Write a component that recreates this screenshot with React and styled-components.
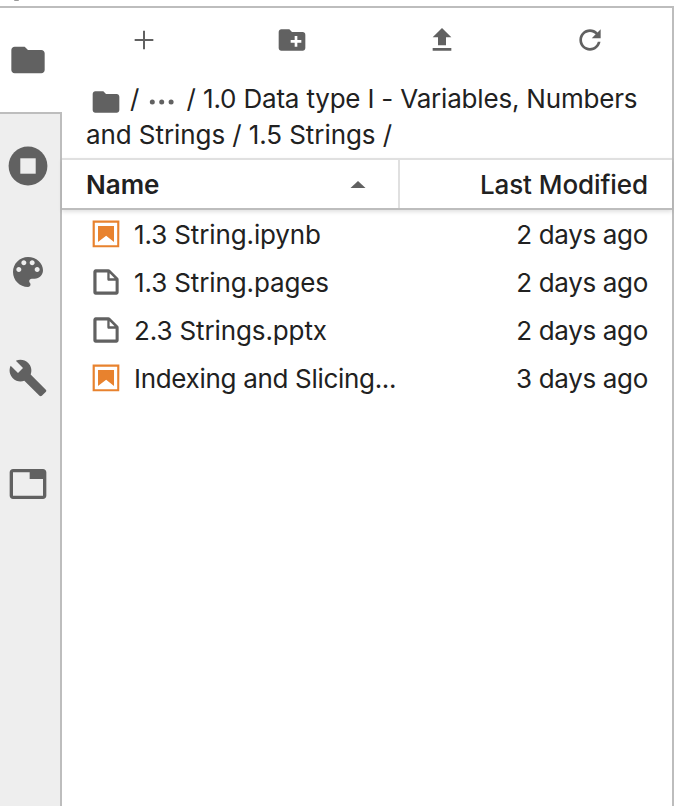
import React from 'react';
import styled, { createGlobalStyle } from 'styled-components';

const Global = createGlobalStyle`
  * { box-sizing: border-box; }
  body { margin: 0; background: #fff; overflow: hidden; }
`;

const Page = styled.div`
  width: 674px;
  height: 806px;
  display: flex;
  flex-direction: column;
  font-family: Inter, 'Liberation Sans', sans-serif;
  font-size: 26px;
  color: #212121;
  background: #fff;
`;

const TopStrip = styled.header`
  flex: 0 0 8px;
  padding-left: 14px;
  border-bottom: 2px solid #bdbdbd;
`;

const StripMark = styled.div`
  width: 5px;
  height: 1px;
  border-radius: 0 0 3px 3px;
  background: #999;
`;

const Body = styled.div`
  flex: 1;
  min-height: 0;
  display: flex;
  border-right: 2px solid #bdbdbd;
`;

const SideBar = styled.nav`
  flex: 0 0 62px;
  display: flex;
  flex-direction: column;
`;

const ActiveTab = styled.div`
  flex: 0 0 104px;
  padding-left: 8px;
  display: flex;
  align-items: center;
`;

const TabList = styled.div`
  flex: 1;
  background: #eee;
  border-top: 2px solid #bdbdbd;
  border-right: 2px solid #bdbdbd;
`;

const SideTab = styled.div`
  height: 106px;
  padding: 0 0 2px 8px;
  display: flex;
  align-items: center;
`;

const Browser = styled.main`
  flex: 1;
  min-width: 0;
`;

const Toolbar = styled.div`
  height: 64px;
  padding-left: 66px;
  display: grid;
  grid-template-columns: 148px 150px 148px 32px;
  align-items: center;
`;

const Crumbs = styled.div`
  height: 86px;
  padding: 9px 0 0 24px;
`;

const CrumbLine = styled.div`
  height: 36px;
  display: flex;
  align-items: center;
  white-space: pre;
`;

const CrumbIcon = styled.span`
  display: flex;
  padding: ${(p) => p.$pad};
`;

const Label = styled.span`
  white-space: pre;
  line-height: 36px;
  letter-spacing: ${(p) => p.$track || 0}px;
`;

const HeaderRow = styled.div`
  height: 52px;
  display: grid;
  grid-template-columns: 338px 1fr;
  border-top: 2px solid #e0e0e0;
  border-bottom: 2px solid #bdbdbd;
  box-shadow: 0 2px 4px rgba(0, 0, 0, 0.12);
  font-weight: 600;
`;

const NameHead = styled.div`
  display: flex;
  align-items: center;
  justify-content: space-between;
  padding: 2px 32px 0 24px;
  border-right: 2px solid #e0e0e0;
`;

const DateHead = styled.div`
  display: flex;
  align-items: center;
  justify-content: flex-end;
  padding: 2px 24px 0 0;
  font-weight: 500;
`;

const FileRow = styled.div`
  height: 48px;
  display: flex;
  align-items: center;
  padding: 0 24px 0 28px;
`;

const FileName = styled.div`
  flex: 1;
  padding: 2px 0 0 12px;
`;

const Modified = styled.div`
  padding-top: 2px;
`;

const Svg = styled.svg`
  display: block;
  flex: none;
`;

const PATHS = {
  folder: 'M10 4H4c-1.1 0-1.99.9-1.99 2L2 18c0 1.1.9 2 2 2h16c1.1 0 2-.9 2-2V8c0-1.1-.9-2-2-2h-8l-2-2z',
  palette: 'M12 3c-4.97 0-9 4.03-9 9s4.03 9 9 9c.83 0 1.5-.67 1.5-1.5 0-.39-.15-.74-.39-1.01-.23-.26-.38-.61-.38-.99 0-.83.67-1.5 1.5-1.5H16c2.76 0 5-2.24 5-5 0-4.42-4.03-8-9-8zm-5.5 9c-.83 0-1.5-.67-1.5-1.5S5.67 9 6.5 9 8 9.67 8 10.5 7.33 12 6.5 12zm3-4C8.67 8 8 7.33 8 6.5S8.67 5 9.5 5s1.5.67 1.5 1.5S10.33 8 9.5 8zm5 0c-.83 0-1.5-.67-1.5-1.5S13.67 5 14.5 5s1.5.67 1.5 1.5S15.33 8 14.5 8zm3 4c-.83 0-1.5-.67-1.5-1.5S16.67 9 17.5 9s1.5.67 1.5 1.5-.67 1.5-1.5 1.5z',
  build: 'M22.7 19l-9.1-9.1c.9-2.3.4-5-1.5-6.9-2-2-5-2.4-7.4-1.3L9 6 6 9 1.6 4.7C.4 7.1.9 10.1 2.9 12.1c1.9 1.9 4.6 2.4 6.9 1.5l9.1 9.1c.4.4 1 .4 1.4 0l2.3-2.3c.5-.4.5-1.1.1-1.4z',
  tab: 'M21 3H3c-1.1 0-2 .9-2 2v14c0 1.1.9 2 2 2h18c1.1 0 2-.9 2-2V5c0-1.1-.9-2-2-2zm0 16H3V5h10v4h8v10z',
  add: 'M19 12.75h-6.25V19h-1.5v-6.25H5v-1.5h6.25V5h1.5v6.25H19z',
  newFolder: 'M20 6h-8l-2-2H4c-1.11 0-1.99.89-1.99 2L2 18c0 1.11.89 2 2 2h16c1.11 0 2-.89 2-2V8c0-1.11-.89-2-2-2zm-1 8h-3v3h-2v-3h-3v-2h3V9h2v3h3v2z',
  upload: 'M9 16h6v-6h4l-7-7-7 7h4zm-4 2h14v2H5z',
  refresh: 'M9 13.5c-2.49 0-4.5-2.01-4.5-4.5S6.51 4.5 9 4.5c1.24 0 2.36.52 3.17 1.33L10 8h5V3l-1.76 1.76C12.15 3.68 10.66 3 9 3 5.69 3 3.01 5.69 3.01 9S5.69 15 9 15c2.97 0 5.43-2.16 5.9-5h-1.52c-.46 2-2.24 3.5-4.38 3.5z',
  file: 'M19.3 8.2l-5.5-5.5c-.3-.3-.7-.5-1.2-.5H3.9c-.8.1-1.6.9-1.6 1.8v14.1c0 .9.7 1.6 1.6 1.6h14.2c.9 0 1.6-.7 1.6-1.6V9.4c.1-.5-.1-.9-.4-1.2zm-5.8-3.3l3.4 3.6h-3.4V4.9zm3.9 12.7H4.7c-.1 0-.2 0-.2-.2V4.7c0-.2.1-.3.2-.3h7.2v4.4s0 .8.3 1.1c.3.3 1.1.3 1.1.3h4.3v7.2s-.1.2-.2.2z',
  notebook: 'M18.7 3.3v15.4H3.3V3.3h15.4m1.5-1.5H1.8v18.3h18.3l.1-18.3zM16.5 16.5l-5.4-4.3-5.6 4.3v-11h11z',
};

const Icon = ({ name, size = 32, box = 24, color = '#616161' }) => (
  <Svg width={size} height={size} viewBox={`0 0 ${box} ${box}`} fill={color}>
    <path d={PATHS[name]} />
  </Svg>
);

const StopIcon = () => (
  <Svg width="40" height="40" viewBox="0 0 40 40">
    <circle cx="20" cy="20" r="19.4" fill="#616161" />
    <rect x="12.3" y="12.3" width="15.4" height="15.4" fill="#eee" />
  </Svg>
);

const Ellipsis = () => (
  <Svg width="26" height="6" viewBox="0 0 26 6" fill="#616161">
    <circle cx="3.3" cy="3" r="2.5" />
    <circle cx="12.7" cy="3" r="2.5" />
    <circle cx="22.1" cy="3" r="2.5" />
  </Svg>
);

const SortUp = () => (
  <Svg width="16" height="8" viewBox="0 0 16 8" fill="#616161">
    <path d="M.5 7 8 0l7.500 7z" />
  </Svg>
);

const FILES = [
  { icon: 'notebook', name: '1.3 String.ipynb', track: -0.12, date: '2 days ago' },
  { icon: 'file', name: '1.3 String.pages', track: -0.12, date: '2 days ago' },
  { icon: 'file', name: '2.3 Strings.pptx', track: -0.12, date: '2 days ago' },
  { icon: 'notebook', name: 'Indexing and Slicing...', track: -0.31, date: '3 days ago' },
];

export default function App() {
  return (
    <Page>
      <Global />
      <TopStrip><StripMark /></TopStrip>
      <Body>
        <SideBar>
          <ActiveTab><Icon name="folder" size={40} /></ActiveTab>
          <TabList>
            <SideTab><StopIcon /></SideTab>
            <SideTab><Icon name="palette" size={40} /></SideTab>
            <SideTab><Icon name="build" size={40} /></SideTab>
            <SideTab><Icon name="tab" size={40} /></SideTab>
          </TabList>
        </SideBar>
        <Browser>
          <Toolbar>
            <Icon name="add" />
            <Icon name="newFolder" />
            <Icon name="upload" />
            <Icon name="refresh" box={18} />
          </Toolbar>
          <Crumbs>
            <CrumbLine>
              <CrumbIcon $pad="5px 8px 0 4px"><Icon name="folder" /></CrumbIcon>
              <Label>/</Label>
              <CrumbIcon $pad="5px 11px 0 10px"><Ellipsis /></CrumbIcon>
              <Label>/ </Label>
              <Label $track={-0.19}>1.0 Data type I - Variables, Numbers</Label>
            </CrumbLine>
            <CrumbLine><Label $track={-0.08}>and Strings / 1.5 Strings /</Label></CrumbLine>
          </Crumbs>
          <HeaderRow>
            <NameHead><Label>Name</Label><SortUp /></NameHead>
            <DateHead><Label $track={-0.08}>Last Modified</Label></DateHead>
          </HeaderRow>
          {FILES.map((f) => (
            <FileRow key={f.name}>
              <Icon name={f.icon} box={22} color={f.icon === 'notebook' ? '#e8822e' : '#616161'} />
              <FileName><Label $track={f.track}>{f.name}</Label></FileName>
              <Modified><Label $track={-0.33}>{f.date}</Label></Modified>
            </FileRow>
          ))}
        </Browser>
      </Body>
    </Page>
  );
}
